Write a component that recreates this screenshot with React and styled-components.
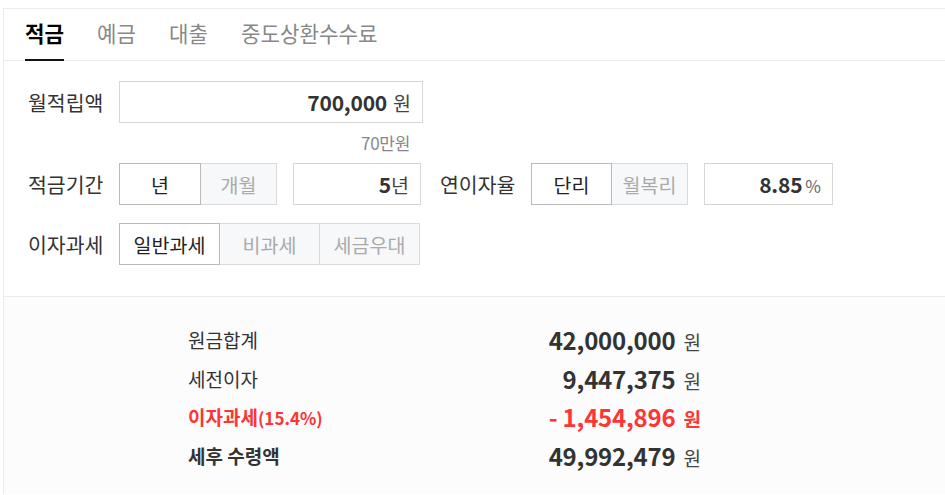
import styled, { createGlobalStyle } from "styled-components";

const GlobalStyle = createGlobalStyle`
	body {
		margin: 0;
		background: #fff;
		font-family: "Noto Sans CJK KR", "Noto Sans", sans-serif;
		color: #333;
	}
`;

const Calculator = styled.div`
	margin: 8px 0 0 3px;
	border: 1px solid #ececec;
	border-right: none;
	border-bottom: none;
	height: 486px;
	box-sizing: border-box;
	background: #fff;
	overflow: hidden;
	display: flex;
	flex-direction: column;
`;

const Tabs = styled.ul`
	display: flex;
	gap: 33px;
	margin: 0;
	padding: 0 0 0 21px;
	list-style: none;
	height: 51px;
	flex-shrink: 0;
	border-bottom: 1px solid #ececec;
`;

const Tab = styled.li`
	display: flex;
	align-items: center;
	padding-bottom: 4px;
	font-size: 21.2px;
	font-weight: ${(p) => (p.$active ? 700 : 400)};
	color: ${(p) => (p.$active ? "#000" : "#888")};
	border-bottom: 2px solid ${(p) => (p.$active ? "#111" : "transparent")};
	margin-bottom: -1px;
	box-sizing: border-box;
`;

const Form = styled.div`
	padding: 20px 0 31px 24px;
	display: flex;
	flex-direction: column;
`;

const Row = styled.div`
	display: flex;
	align-items: center;
	height: 42px;
	margin-top: ${(p) => p.$top || 0}px;
`;

const Label = styled.span`
	font-size: 20.5px;
	color: #333;
	width: ${(p) => p.$w || 91}px;
	flex-shrink: 0;
	margin-left: ${(p) => p.$ml || 0}px;
`;

const Field = styled.div`
	display: flex;
	align-items: baseline;
	justify-content: flex-end;
	width: ${(p) => p.$w}px;
	height: 42px;
	box-sizing: border-box;
	border: 1px solid #d6d6d6;
	padding: 0 11px 0 10px;
	line-height: 40px;
	margin-left: ${(p) => p.$ml || 0}px;
`;

const Num = styled.b`
	font-size: 21px;
	font-weight: 700;
	color: #333;
	letter-spacing: -0.2px;
`;

const Unit = styled.span`
	font-size: ${(p) => p.$size || 19.5}px;
	color: ${(p) => p.$color || "#444"};
	margin-left: ${(p) => p.$gap || 0}px;
`;

const Helper = styled.div`
	width: 291px;
	margin-left: 91px;
	text-align: right;
	font-size: 17px;
	color: #888;
	height: 20px;
	line-height: 20px;
	margin-top: 10px;
	letter-spacing: -0.3px;
`;

const Segments = styled.div`
	display: flex;
	height: 42px;
`;

const Segment = styled.div`
	position: relative;
	z-index: ${(p) => (p.$on ? 1 : 0)};
	width: ${(p) => p.$w}px;
	box-sizing: border-box;
	display: flex;
	align-items: center;
	justify-content: center;
	border: 1px solid ${(p) => (p.$on ? "#bababa" : "#dadada")};
	background: ${(p) => (p.$on ? "#fff" : "#f7f8fa")};
	color: ${(p) => (p.$on ? "#222" : "#aaa")};
	font-size: 19.5px;
	& + & {
		margin-left: -1px;
	}
`;

const Results = styled.div`
	border-top: 1px solid #ececec;
	background: #fcfcfc;
	padding: 23px 0 30px 184px;
	flex: 1;
`;

const ResultRow = styled.div`
	display: flex;
	align-items: center;
	justify-content: space-between;
	width: 513px;
	height: 38.7px;
	color: ${(p) => (p.$red ? "#ff3434" : "#333")};
`;

const ResultLabel = styled.span`
	font-size: 19px;
	font-weight: ${(p) => (p.$bold ? 700 : 400)};

	small {
		font-size: 17px;
	}
`;

const ResultValue = styled.span`
	display: flex;
	align-items: baseline;

	b {
		font-size: 24px;
		font-weight: 700;
		letter-spacing: -0.2px;
	}
`;

const Won = styled.span`
	font-size: 19px;
	margin-left: 8px;
	font-weight: ${(p) => (p.$bold ? 700 : 400)};
	color: ${(p) => (p.$bold ? "#ff3434" : "#444")};
`;

const results = [
	{ label: "원금합계", value: "42,000,000" },
	{ label: "세전이자", value: "9,447,375" },
	{ label: "이자과세", sub: "(15.4%)", value: "- 1,454,896", red: true },
	{ label: "세후 수령액", value: "49,992,479", bold: true },
];

function App() {
	return (
		<>
			<GlobalStyle />
			<Calculator>
				<Tabs>
					<Tab $active>적금</Tab>
					<Tab>예금</Tab>
					<Tab>대출</Tab>
					<Tab>중도상환수수료</Tab>
				</Tabs>

				<Form>
					<Row>
						<Label>월적립액</Label>
						<Field $w={304}>
							<Num>700,000</Num>
							<Unit $gap={6}>원</Unit>
						</Field>
					</Row>
					<Helper>70만원</Helper>

					<Row $top={10}>
						<Label>적금기간</Label>
						<Segments>
							<Segment $on $w={82}>
								년
							</Segment>
							<Segment $w={77}>개월</Segment>
						</Segments>
						<Field $w={128} $ml={16}>
							<Num>5</Num>
							<Unit>년</Unit>
						</Field>
						<Label $w={91} $ml={19}>
							연이자율
						</Label>
						<Segments>
							<Segment $on $w={81}>
								단리
							</Segment>
							<Segment $w={77}>월복리</Segment>
						</Segments>
						<Field $w={129} $ml={16}>
							<Num>8.85</Num>
							<Unit $size={17} $color="#666" $gap={3}>
								%
							</Unit>
						</Field>
					</Row>

					<Row $top={18}>
						<Label>이자과세</Label>
						<Segments>
							<Segment $on $w={101}>
								일반과세
							</Segment>
							<Segment $w={101}>비과세</Segment>
							<Segment $w={101}>세금우대</Segment>
						</Segments>
					</Row>
				</Form>

				<Results>
					{results.map((r) => (
						<ResultRow key={r.label} $red={r.red}>
							<ResultLabel $bold={r.bold || r.red}>
								{r.label}
								{r.sub && <small>{r.sub}</small>}
							</ResultLabel>
							<ResultValue>
								<b>{r.value}</b>
								<Won $bold={r.red}>원</Won>
							</ResultValue>
						</ResultRow>
					))}
				</Results>
			</Calculator>
		</>
	);
}

export default App;
